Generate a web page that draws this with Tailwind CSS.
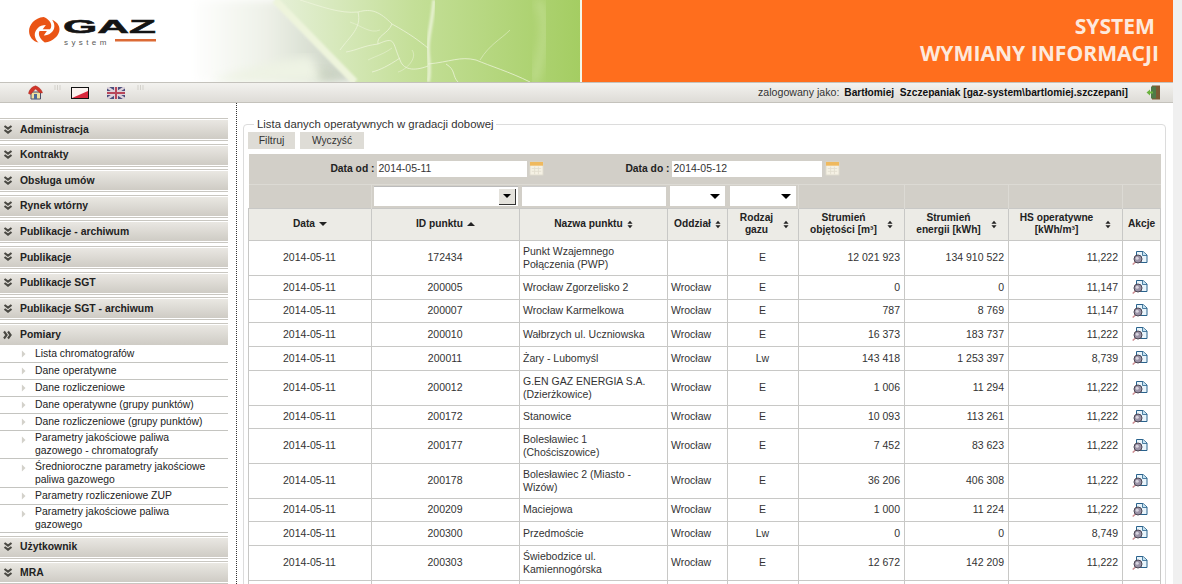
<!DOCTYPE html>
<html lang="pl">
<head>
    <meta charset="UTF-8">
    <title>System Wymiany Informacji</title>
    <script src="https://cdn.jsdelivr.net/npm/@tailwindcss/browser@4"></script>
</head>
<body class="h-[584px] overflow-hidden bg-[#f0f0f0] font-['Liberation_Sans',Arial,sans-serif] text-[11px] text-[#222]">
    <svg class="hidden">
        <symbol id="more" viewBox="0 0 16 14">
            <path d="M4.5 0.5h6.5l4 3.5v7.5H4.5z" fill="#e8f4fb" stroke="#2a628c" stroke-width="1"/>
            <path d="M10.5 0.5v4h4.5" fill="#c4e2f2" stroke="#2a628c" stroke-width="0.8"/>
            <path d="M4 10.5L0.7 13.5" stroke="#c98a8f" stroke-width="1.5"/>
            <circle cx="6" cy="8" r="4" fill="#9a92a6" stroke="#4a4552"/>
            <circle cx="5.2" cy="7.2" r="1.5" fill="#d8d5de"/>
        </symbol>
        <symbol id="down" viewBox="0 0 10 10">
            <path d="M1.5 1L5 3.6 8.5 1M1.5 5L5 7.6 8.5 5" fill="none" stroke="#4a4943" stroke-width="2.1"/>
        </symbol>
        <symbol id="tri" viewBox="0 0 6 10">
            <path d="M1 0.5L5.5 5 1 9.5z" fill="#d3d1ca"/>
        </symbol>
        <symbol id="cal" viewBox="0 0 16 16">
            <rect x="1" y="1" width="14" height="14" fill="#f5f1e4" stroke="#dcd8cc"/>
            <rect x="1" y="1" width="14" height="4" fill="#efb95e"/>
            <path d="M3 8h10M3 11h10M6 6v8M10 6v8" stroke="#e2decf"/>
        </symbol>
        <symbol id="sort" viewBox="0 0 7 10">
            <path d="M3.5 0.5L6.5 4h-6zM3.5 9.5L0.5 6h6z" fill="#222"/>
        </symbol>
        <symbol id="sep" viewBox="0 0 7 5">
            <path d="M1 0v5M3.5 0v5M6 0v5" stroke="#d3d1cb"/>
        </symbol>
    </svg>

    <div class="w-[1173px] h-full bg-white">
        <!-- naglowek -->
        <header class="flex h-[82px]">
            <div class="w-[582px] relative overflow-hidden bg-white">
                <svg class="absolute inset-0" width="582" height="82" viewBox="0 0 582 82">
                    <defs>
                        <linearGradient id="leaf" x1="0" x2="1" y1="0" y2="0">
                            <stop offset="0" stop-color="#e6f0d8"/>
                            <stop offset="0.45" stop-color="#c4df98"/>
                            <stop offset="1" stop-color="#a4cd62"/>
                        </linearGradient>
                        <linearGradient id="shade" x1="0" x2="1" y1="0" y2="0">
                            <stop offset="0" stop-color="#fff"/>
                            <stop offset="0.45" stop-color="#eef1e8"/>
                            <stop offset="1" stop-color="#c4cdbd"/>
                        </linearGradient>
                        <filter id="soft"><feGaussianBlur stdDeviation="1"/></filter>
                        <filter id="softer"><feGaussianBlur stdDeviation="5"/></filter>
                    </defs>
                    <path d="M190 0H282L358 82H190z" fill="url(#shade)" filter="url(#softer)"/>
                    <path d="M210 82C240 70 270 62 310 56L325 82z" fill="#eef3e4" filter="url(#softer)"/>
                    <path d="M275 0H581V82H355z" fill="url(#leaf)"/>
                    <path d="M310 82C325 80 320 72 315 66L345 82z" fill="#b9c4ad" opacity="0.5" filter="url(#softer)"/>
                    <path d="M275 0L355 82" stroke="#eef4dc" stroke-width="7" filter="url(#soft)"/>
                    <path d="M434 0C432 25 428 35 428 48C428 60 431 70 428 82" stroke="#e6f1cf" stroke-width="3.5" fill="none" filter="url(#soft)"/>
                    <path d="M300 0C320 6 340 14 358 12C372 8 380 12 392 24C410 34 418 40 428 48M358 12C362 28 350 36 340 50M392 24C388 34 376 36 378 44C396 36 392 42 400 60C404 72 418 70 428 66M378 44C362 46 358 50 346 52M428 64C450 62 460 56 476 60C490 66 510 72 530 82M446 64C456 70 452 76 458 82M400 58C388 66 380 70 372 72" stroke="#eef5dc" stroke-width="0.9" fill="none" opacity="0.85"/>
                    <path d="M350 22C362 26 370 34 380 30M368 60C376 56 384 54 392 48M412 50C418 58 406 70 398 72M480 60C490 44 500 40 510 30" stroke="#eef5dc" stroke-width="0.7" fill="none" opacity="0.7"/>
                    <path d="M538 0C552 25 540 60 534 82" stroke="#d3e8ac" stroke-width="8" fill="none" opacity="0.5" filter="url(#softer)"/>
                    <rect x="580" width="2" height="82" fill="#f4f8ea"/>
                </svg>
                <svg class="absolute left-[27px] top-[15px]" width="130" height="32" viewBox="0 0 130 32">
                    <g transform="translate(1 2) scale(1.05 .88)">
                        <path d="M15 0C6 1 1 9 1 16c0 7 4 12 9 13C6 24 5 18 9 13c2-3 5-4 8-4L14 14l7 0C24 9 21 3 15 0z" fill="#ea5415"/>
                        <path d="M16 29c8-1 14-8 14-15 0-5-3-9-7-11 3 5 3 11-1 15-2 2-4 3-7 3l3-5h-7c-2 4 1 10 5 13z" fill="#ea5415"/>
                    </g>
                    <text x="36" y="18" font-family="Liberation Sans" font-weight="700" font-size="19" fill="#141414" stroke="#141414" stroke-width="0.5" textLength="93" lengthAdjust="spacingAndGlyphs">GAZ</text>
                    <text x="37" y="29.5" font-family="Liberation Sans" font-size="8" letter-spacing="3.4" fill="#5a5a5a">system</text>
                    <rect x="88" y="24" width="41" height="2.5" fill="#dc6a35"/>
                </svg>
            </div>
            <div class="flex-1 bg-[#ff6e1d] flex flex-col items-end pr-[14px] pt-[12px] font-['Open_Sans',sans-serif] font-bold text-[21.1px] leading-[27px] text-[#fde9dc]">
                <div class="pr-[4px]">SYSTEM</div>
                <div>WYMIANY INFORMACJI</div>
            </div>
        </header>

        <!-- pasek -->
        <div class="flex items-center justify-between h-[21px] border-y border-[#c4c2bc] bg-gradient-to-b from-[#f3f2ef] to-[#dedcd7]">
            <div class="flex items-center pl-[28px]">
                <svg width="15" height="15" viewBox="0 0 15 15">
                    <path d="M3 7h9.5v7H3z" fill="#efdf9f" stroke="#4b4f6a"/>
                    <path d="M0.5 8.5C1 5 4 1.5 7.5 0.8 11 2 14 5 14.5 8L12 8 7.5 4 2.5 9.5z" fill="#d1352a" stroke="#9e2a22" stroke-width="0.4"/>
                    <rect x="6" y="9" width="3" height="5" fill="#4d6a9a"/>
                </svg>
                <svg class="ml-[11px] self-start w-[7px] h-[5px]"><use href="#sep"/></svg>
                <svg class="ml-[10px]" width="18" height="12" viewBox="0 0 18 12">
                    <rect x="0.5" y="0.5" width="17" height="11" fill="#fbf3f0" stroke="#111"/>
                    <path d="M1 11L17 4v7z" fill="#d8283c"/>
                </svg>
                <svg class="ml-[18px]" width="18" height="12" viewBox="0 0 18 12">
                    <rect width="18" height="12" fill="#4b4d7c"/>
                    <path d="M0 0l18 12M18 0L0 12" stroke="#ddd2da" stroke-width="2.4"/>
                    <path d="M9 0v12M0 6h18" stroke="#ddd2da" stroke-width="4"/>
                    <path d="M9 0v12M0 6h18" stroke="#b8475a" stroke-width="2"/>
                </svg>
                <svg class="ml-[12px] self-start w-[7px] h-[5px]"><use href="#sep"/></svg>
            </div>
            <div class="flex items-center pr-[12px]">
                <span class="text-[10.6px] text-[#333]">zalogowany jako:</span>
                <span class="ml-[5px] text-[10.2px] font-bold text-[#111]">Bartłomiej&nbsp; Szczepaniak [gaz-system\bartlomiej.szczepani]</span>
                <svg class="ml-[18px]" width="15" height="15" viewBox="0 0 15 15">
                    <rect x="6" y="0.5" width="8" height="14" fill="#7c5a33"/>
                    <rect x="5" y="1.5" width="5" height="12" fill="#4f7a47"/>
                    <path d="M0.5 7.5L4 4.5v2h3v2H4v2z" fill="#6cb33f"/>
                </svg>
            </div>
        </div>

        <div class="flex">
            <!-- menu -->
            <nav class="w-[237px] h-[481px] shrink-0 pt-[15px] border-r border-dotted border-[#333] text-[10.4px]">
                <div class="w-[228px] flex flex-col">
                    <a class="flex items-center h-[23px] mb-[2.6px] py-[1px] border-y border-[#c9c7c1] bg-clip-content bg-gradient-to-b from-[#ebe9e4] to-[#cdcac3] font-bold text-[#222]"><svg class="w-[10px] h-[10px] ml-[3px] mr-[7px]"><use href="#down"/></svg>Administracja</a>
                    <a class="flex items-center h-[23px] mb-[2.6px] py-[1px] border-y border-[#c9c7c1] bg-clip-content bg-gradient-to-b from-[#ebe9e4] to-[#cdcac3] font-bold text-[#222]"><svg class="w-[10px] h-[10px] ml-[3px] mr-[7px]"><use href="#down"/></svg>Kontrakty</a>
                    <a class="flex items-center h-[23px] mb-[2.6px] py-[1px] border-y border-[#c9c7c1] bg-clip-content bg-gradient-to-b from-[#ebe9e4] to-[#cdcac3] font-bold text-[#222]"><svg class="w-[10px] h-[10px] ml-[3px] mr-[7px]"><use href="#down"/></svg>Obsługa umów</a>
                    <a class="flex items-center h-[23px] mb-[2.6px] py-[1px] border-y border-[#c9c7c1] bg-clip-content bg-gradient-to-b from-[#ebe9e4] to-[#cdcac3] font-bold text-[#222]"><svg class="w-[10px] h-[10px] ml-[3px] mr-[7px]"><use href="#down"/></svg>Rynek wtórny</a>
                    <a class="flex items-center h-[23px] mb-[2.6px] py-[1px] border-y border-[#c9c7c1] bg-clip-content bg-gradient-to-b from-[#ebe9e4] to-[#cdcac3] font-bold text-[#222]"><svg class="w-[10px] h-[10px] ml-[3px] mr-[7px]"><use href="#down"/></svg>Publikacje - archiwum</a>
                    <a class="flex items-center h-[23px] mb-[2.6px] py-[1px] border-y border-[#c9c7c1] bg-clip-content bg-gradient-to-b from-[#ebe9e4] to-[#cdcac3] font-bold text-[#222]"><svg class="w-[10px] h-[10px] ml-[3px] mr-[7px]"><use href="#down"/></svg>Publikacje</a>
                    <a class="flex items-center h-[23px] mb-[2.6px] py-[1px] border-y border-[#c9c7c1] bg-clip-content bg-gradient-to-b from-[#ebe9e4] to-[#cdcac3] font-bold text-[#222]"><svg class="w-[10px] h-[10px] ml-[3px] mr-[7px]"><use href="#down"/></svg>Publikacje SGT</a>
                    <a class="flex items-center h-[23px] mb-[2.6px] py-[1px] border-y border-[#c9c7c1] bg-clip-content bg-gradient-to-b from-[#ebe9e4] to-[#cdcac3] font-bold text-[#222]"><svg class="w-[10px] h-[10px] ml-[3px] mr-[7px]"><use href="#down"/></svg>Publikacje SGT - archiwum</a>
                    <a class="flex items-center h-[23px] py-[1px] border-t border-[#c9c7c1] bg-clip-content bg-gradient-to-b from-[#ebe9e4] to-[#cdcac3] font-bold text-[#222]"><svg class="w-[10px] h-[10px] ml-[3px] mr-[7px] -rotate-90"><use href="#down"/></svg>Pomiary</a>

                    <ul class="text-[#222] [&_li]:flex [&_li]:border-b [&_li]:border-[#c4c4c0] [&_li]:leading-[13px]">
                        <li class="h-[17px] items-center"><svg class="w-[5px] h-[8px] ml-[21px] mr-[9px] shrink-0"><use href="#tri"/></svg>Lista chromatografów</li>
                        <li class="h-[17px] items-center"><svg class="w-[5px] h-[8px] ml-[21px] mr-[9px] shrink-0"><use href="#tri"/></svg>Dane operatywne</li>
                        <li class="h-[17px] items-center"><svg class="w-[5px] h-[8px] ml-[21px] mr-[9px] shrink-0"><use href="#tri"/></svg>Dane rozliczeniowe</li>
                        <li class="h-[17px] items-center"><svg class="w-[5px] h-[8px] ml-[21px] mr-[9px] shrink-0"><use href="#tri"/></svg>Dane operatywne (grupy punktów)</li>
                        <li class="h-[17px] items-center"><svg class="w-[5px] h-[8px] ml-[21px] mr-[9px] shrink-0"><use href="#tri"/></svg>Dane rozliczeniowe (grupy punktów)</li>
                        <li class="h-[28px] items-center"><svg class="w-[5px] h-[8px] ml-[21px] mr-[9px] shrink-0 self-start mt-[5px]"><use href="#tri"/></svg><span>Parametry jakościowe paliwa<br>gazowego - chromatografy</span></li>
                        <li class="h-[29px] items-center"><svg class="w-[5px] h-[8px] ml-[21px] mr-[9px] shrink-0 self-start mt-[5px]"><use href="#tri"/></svg><span>Średnioroczne parametry jakościowe<br>paliwa gazowego</span></li>
                        <li class="h-[17px] items-center"><svg class="w-[5px] h-[8px] ml-[21px] mr-[9px] shrink-0"><use href="#tri"/></svg>Parametry rozliczeniowe ZUP</li>
                        <li class="h-[28px] items-center"><svg class="w-[5px] h-[8px] ml-[21px] mr-[9px] shrink-0 self-start mt-[5px]"><use href="#tri"/></svg><span>Parametry jakościowe paliwa<br>gazowego</span></li>
                    </ul>

                    <a class="flex items-center h-[23px] mt-[3px] mb-[2.6px] py-[1px] border-y border-[#c9c7c1] bg-clip-content bg-gradient-to-b from-[#ebe9e4] to-[#cdcac3] font-bold text-[#222]"><svg class="w-[10px] h-[10px] ml-[3px] mr-[7px]"><use href="#down"/></svg>Użytkownik</a>
                    <a class="flex items-center h-[23px] py-[1px] border-y border-[#c9c7c1] bg-clip-content bg-gradient-to-b from-[#ebe9e4] to-[#cdcac3] font-bold text-[#222]"><svg class="w-[10px] h-[10px] ml-[3px] mr-[7px]"><use href="#down"/></svg>MRA</a>
                </div>
            </nav>

            <!-- tresc -->
            <main class="flex-1 pl-[6px] pr-[7px] pt-[14px]">
                <fieldset class="border border-[#dcdcdc] rounded-[4px] pl-[4px] pr-[4px] h-[500px]">
                    <legend class="ml-[6px] px-[3px] text-[11.35px] leading-[14px] text-[#333]">Lista danych operatywnych w gradacji dobowej</legend>
                    <div class="flex gap-[5px] mt-[1px]">
                        <button class="w-[47px] h-[17px] bg-[#dedcd6] text-[#333] text-[10.5px]">Filtruj</button>
                        <button class="w-[64px] h-[17px] bg-[#dedcd6] text-[#333] text-[10.2px]">Wyczyść</button>
                    </div>
                    <table class="mt-[5px] w-[912px] table-fixed border-collapse text-[10.5px] text-[#333] [&_td]:border [&_td]:border-[#c8c8c6] [&_td]:pl-[3px] [&_td]:pr-[4px] [&_td]:py-0 [&_td]:leading-[13px] [&_th]:p-0">
                        <colgroup>
                            <col class="w-[123px]"><col class="w-[148px]"><col class="w-[148px]"><col class="w-[60px]"><col class="w-[71px]"><col class="w-[106px]"><col class="w-[104px]"><col class="w-[114px]"><col class="w-[38px]">
                        </colgroup>
                        <thead>
                            <tr class="h-[30px] bg-[#d2cfc8]">
                                <th colspan="9">
                                    <div class="flex items-center text-[10.3px] font-bold text-[#222]">
                                        <span class="w-[126px] text-right">Data od :</span>
                                        <span class="ml-[2px] flex items-center w-[150px] h-[16px] pl-[2px] bg-white text-[10.5px] font-normal text-[#333]">2014-05-11</span>
                                        <svg class="ml-[2px] w-[15px] h-[15px]"><use href="#cal"/></svg>
                                        <span class="w-[126px] text-right">Data do :</span>
                                        <span class="ml-[2px] flex items-center w-[150px] h-[16px] pl-[2px] bg-white text-[10.5px] font-normal text-[#333]">2014-05-12</span>
                                        <svg class="ml-[3px] w-[15px] h-[15px]"><use href="#cal"/></svg>
                                    </div>
                                </th>
                            </tr>
                            <tr class="h-[24px] bg-[#d2cfc8] [&_th]:border-t [&_th]:border-[#dcdad4]">
                                <th class="border-r border-[#d2cfc8]"></th>
                                <th>
                                    <div class="flex items-center w-[144px] h-[20px] ml-[2px] bg-white border-t border-[#bbb]">
                                        <span class="ml-auto mr-[2px] flex items-center justify-center w-[17px] h-[16px] bg-[#e4e2dc] border-r border-b border-[#333]"><span class="border-x-[4px] border-t-[4px] border-x-transparent border-t-black"></span></span>
                                    </div>
                                </th>
                                <th><div class="w-[144px] h-[20px] ml-[2px] bg-white border-t border-[#ccc]"></div></th>
                                <th>
                                    <div class="flex items-center w-[55px] h-[20px] ml-[2px] bg-white">
                                        <span class="ml-auto mr-[5px] border-x-[5px] border-t-[5px] border-x-transparent border-t-black"></span>
                                    </div>
                                </th>
                                <th>
                                    <div class="flex items-center w-[66px] h-[20px] ml-[2px] bg-white">
                                        <span class="ml-auto mr-[5px] border-x-[5px] border-t-[5px] border-x-transparent border-t-black"></span>
                                    </div>
                                </th>
                                <th class="border-l border-[#dcdad4]"></th>
                                <th class="border-l border-[#dcdad4]"></th>
                                <th class="border-l border-[#dcdad4]"></th>
                                <th class="border-l border-[#dcdad4]"></th>
                            </tr>
                            <tr class="h-[32px] bg-[#ecebe6] text-[10.2px] text-[#222] leading-[12px] font-bold [&_th]:border [&_th]:border-[#c8c8c6]">
                                <th><span class="inline-flex items-center gap-[4px]">Data <span class="border-x-[4px] border-t-[4px] border-x-transparent border-t-[#222]"></span></span></th>
                                <th><span class="inline-flex items-center gap-[4px]">ID punktu <span class="border-x-[4px] border-b-[4px] border-x-transparent border-b-[#222]"></span></span></th>
                                <th><span class="inline-flex items-center gap-[4px]">Nazwa punktu <svg class="w-[6px] h-[9px]"><use href="#sort"/></svg></span></th>
                                <th><span class="inline-flex items-center gap-[4px]">Oddział <svg class="w-[6px] h-[9px]"><use href="#sort"/></svg></span></th>
                                <th><div class="flex items-center justify-center gap-[10px] pl-[3px]"><span>Rodzaj<br>gazu</span><svg class="w-[6px] h-[9px]"><use href="#sort"/></svg></div></th>
                                <th><div class="flex items-center justify-center gap-[10px]"><span>Strumień<br>objętości [m³]</span><svg class="w-[6px] h-[9px]"><use href="#sort"/></svg></div></th>
                                <th><div class="flex items-center justify-center gap-[10px]"><span>Strumień<br>energii [kWh]</span><svg class="w-[6px] h-[9px]"><use href="#sort"/></svg></div></th>
                                <th><div class="flex items-center justify-center gap-[12px]"><span>HS operatywne<br>[kWh/m³]</span><svg class="w-[6px] h-[9px]"><use href="#sort"/></svg></div></th>
                                <th>Akcje</th>
                            </tr>
                        </thead>
                        <tbody class="bg-white">
                            <tr class="h-[35px]"><td class="text-center">2014-05-11</td><td class="text-center">172434</td><td>Punkt Wzajemnego Połączenia (PWP)</td><td></td><td class="text-center">E</td><td class="text-right">12 021 923</td><td class="text-right">134 910 522</td><td class="text-right">11,222</td><td class="text-center"><svg class="inline align-middle w-[16px] h-[14px] mr-[2px]"><use href="#more"/></svg></td></tr>
                            <tr class="h-[24px]"><td class="text-center">2014-05-11</td><td class="text-center">200005</td><td>Wrocław Zgorzelisko 2</td><td>Wrocław</td><td class="text-center">E</td><td class="text-right">0</td><td class="text-right">0</td><td class="text-right">11,147</td><td class="text-center"><svg class="inline align-middle w-[16px] h-[14px] mr-[2px]"><use href="#more"/></svg></td></tr>
                            <tr class="h-[23px]"><td class="text-center">2014-05-11</td><td class="text-center">200007</td><td>Wrocław Karmelkowa</td><td>Wrocław</td><td class="text-center">E</td><td class="text-right">787</td><td class="text-right">8 769</td><td class="text-right">11,147</td><td class="text-center"><svg class="inline align-middle w-[16px] h-[14px] mr-[2px]"><use href="#more"/></svg></td></tr>
                            <tr class="h-[24px]"><td class="text-center">2014-05-11</td><td class="text-center">200010</td><td>Wałbrzych ul. Uczniowska</td><td>Wrocław</td><td class="text-center">E</td><td class="text-right">16 373</td><td class="text-right">183 737</td><td class="text-right">11,222</td><td class="text-center"><svg class="inline align-middle w-[16px] h-[14px] mr-[2px]"><use href="#more"/></svg></td></tr>
                            <tr class="h-[24px]"><td class="text-center">2014-05-11</td><td class="text-center">200011</td><td>Żary - Lubomyśl</td><td>Wrocław</td><td class="text-center">Lw</td><td class="text-right">143 418</td><td class="text-right">1 253 397</td><td class="text-right">8,739</td><td class="text-center"><svg class="inline align-middle w-[16px] h-[14px] mr-[2px]"><use href="#more"/></svg></td></tr>
                            <tr class="h-[35px]"><td class="text-center">2014-05-11</td><td class="text-center">200012</td><td>G.EN GAZ ENERGIA S.A. (Dzierżkowice)</td><td>Wrocław</td><td class="text-center">E</td><td class="text-right">1 006</td><td class="text-right">11 294</td><td class="text-right">11,222</td><td class="text-center"><svg class="inline align-middle w-[16px] h-[14px] mr-[2px]"><use href="#more"/></svg></td></tr>
                            <tr class="h-[23px]"><td class="text-center">2014-05-11</td><td class="text-center">200172</td><td>Stanowice</td><td>Wrocław</td><td class="text-center">E</td><td class="text-right">10 093</td><td class="text-right">113 261</td><td class="text-right">11,222</td><td class="text-center"><svg class="inline align-middle w-[16px] h-[14px] mr-[2px]"><use href="#more"/></svg></td></tr>
                            <tr class="h-[35px]"><td class="text-center">2014-05-11</td><td class="text-center">200177</td><td>Bolesławiec 1 (Chościszowice)</td><td>Wrocław</td><td class="text-center">E</td><td class="text-right">7 452</td><td class="text-right">83 623</td><td class="text-right">11,222</td><td class="text-center"><svg class="inline align-middle w-[16px] h-[14px] mr-[2px]"><use href="#more"/></svg></td></tr>
                            <tr class="h-[35px]"><td class="text-center">2014-05-11</td><td class="text-center">200178</td><td>Bolesławiec 2 (Miasto - Wizów)</td><td>Wrocław</td><td class="text-center">E</td><td class="text-right">36 206</td><td class="text-right">406 308</td><td class="text-right">11,222</td><td class="text-center"><svg class="inline align-middle w-[16px] h-[14px] mr-[2px]"><use href="#more"/></svg></td></tr>
                            <tr class="h-[23px]"><td class="text-center">2014-05-11</td><td class="text-center">200209</td><td>Maciejowa</td><td>Wrocław</td><td class="text-center">E</td><td class="text-right">1 000</td><td class="text-right">11 224</td><td class="text-right">11,222</td><td class="text-center"><svg class="inline align-middle w-[16px] h-[14px] mr-[2px]"><use href="#more"/></svg></td></tr>
                            <tr class="h-[24px]"><td class="text-center">2014-05-11</td><td class="text-center">200300</td><td>Przedmoście</td><td>Wrocław</td><td class="text-center">Lw</td><td class="text-right">0</td><td class="text-right">0</td><td class="text-right">8,749</td><td class="text-center"><svg class="inline align-middle w-[16px] h-[14px] mr-[2px]"><use href="#more"/></svg></td></tr>
                            <tr class="h-[35px]"><td class="text-center">2014-05-11</td><td class="text-center">200303</td><td>Świebodzice ul. Kamiennogórska</td><td>Wrocław</td><td class="text-center">E</td><td class="text-right">12 672</td><td class="text-right">142 209</td><td class="text-right">11,222</td><td class="text-center"><svg class="inline align-middle w-[16px] h-[14px] mr-[2px]"><use href="#more"/></svg></td></tr>
                            <tr class="h-[24px]"><td></td><td></td><td></td><td></td><td></td><td></td><td></td><td></td><td></td></tr>
                        </tbody>
                    </table>
                </fieldset>
            </main>
        </div>
    </div>
</body>
</html>
